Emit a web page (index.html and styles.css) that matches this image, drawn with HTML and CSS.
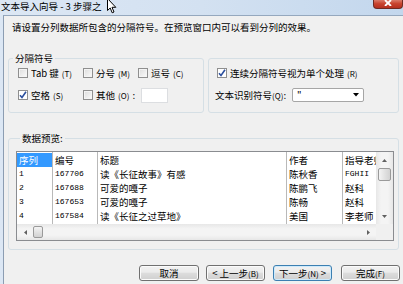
FILE: index.html
```html
<!DOCTYPE html>
<html lang="zh-CN">
<head>
<meta charset="utf-8">
<title>文本导入向导</title>
<link rel="stylesheet" href="styles.css">
</head>
<body>
<div class="window">
  <div class="titlebar">
    <span class="title">文本导入向导 - 3 步骤之</span>
    <svg class="cursor" width="10" height="14" viewBox="0 0 10 14"><path d="M0.5 -1.5 L0.5 10.5 L3.2 8 L5.2 12.8 L7 12 L5 7.3 L8.8 7.3 Z" fill="#fff" stroke="#000" stroke-width="1"/></svg>
    <div class="close"><svg width="8" height="6" viewBox="0 0 8 6"><path d="M1 0 L7 6 M7 0 L1 6" stroke="#fff" stroke-width="1.8"/></svg></div>
  </div>
  <div class="client">
    <p class="intro">请设置分列数据所包含的分隔符号。在预览窗口内可以看到分列的效果。</p>
    <div class="delims">
      <fieldset class="group g-left">
        <legend>分隔符号</legend>
        <div class="opts">
          <label class="cb"><span class="box"></span>Tab 键<span class="acc">(T)</span></label>
          <label class="cb"><span class="box"></span>分号<span class="acc">(M)</span></label>
          <label class="cb"><span class="box"></span>逗号<span class="acc">(C)</span></label>
          <label class="cb"><span class="box checked"><svg width="8" height="8" viewBox="0 0 8 8"><path d="M1 4.2 L3 6.5 L7 0.8" fill="none" stroke="#2b4f9e" stroke-width="1.6"/></svg></span>空格<span class="acc">(S)</span></label>
          <label class="cb span2"><span class="box"></span>其他<span class="acc">(O)</span>:<span class="other"></span></label>
        </div>
      </fieldset>
      <fieldset class="group g-right">
        <div class="ropts">
          <label class="cb"><span class="box checked"><svg width="8" height="8" viewBox="0 0 8 8"><path d="M1 4.2 L3 6.5 L7 0.8" fill="none" stroke="#2b4f9e" stroke-width="1.6"/></svg></span>连续分隔符号视为单个处理<span class="acc">(R)</span></label>
          <div class="qrow">
            <span>文本识别符号<span class="acc">(Q)</span>:</span>
            <div class="select"><span>"</span><svg width="6" height="4" viewBox="0 0 6 4"><path d="M0 0 H6 L3 3.5 Z" fill="#000"/></svg></div>
          </div>
        </div>
      </fieldset>
    </div>
    <fieldset class="group g-preview">
      <legend>数据预览:</legend>
      <div class="pbox">
        <div class="pdata">
          <div class="ptable">
            <div class="col c1"><div class="cell sel">序列</div><div class="cell mono">1</div><div class="cell mono">2</div><div class="cell mono">3</div><div class="cell mono">4</div></div>
            <div class="col c2"><div class="cell">编号</div><div class="cell mono">167706</div><div class="cell mono">167688</div><div class="cell mono">167653</div><div class="cell mono">167584</div></div>
            <div class="col c3"><div class="cell">标题</div><div class="cell">读《长征故事》有感</div><div class="cell">可爱的嘎子</div><div class="cell">可爱的嘎子</div><div class="cell">读《长征之过草地》</div></div>
            <div class="col c4"><div class="cell">作者</div><div class="cell">陈秋香</div><div class="cell">陈鹏飞</div><div class="cell">陈畅</div><div class="cell">美国</div></div>
            <div class="col c5"><div class="cell">指导老师</div><div class="cell mono">FGHII</div><div class="cell">赵科</div><div class="cell">赵科</div><div class="cell">李老师</div></div>
          </div>
          <div class="vscroll">
            <div class="sbtn"><svg width="5" height="3" viewBox="0 0 5 3"><path d="M0 3 L2.5 0 L5 3 Z" fill="#606060"/></svg></div>
            <div class="vthumb"></div>
            <div class="vtrack"></div>
            <div class="sbtn"><svg width="5" height="3" viewBox="0 0 5 3"><path d="M0 0 L2.5 3 L5 0 Z" fill="#606060"/></svg></div>
          </div>
        </div>
        <div class="pfoot">
          <div class="hscroll">
            <div class="hbtn"><svg width="3" height="5" viewBox="0 0 3 5"><path d="M3 0 L0 2.5 L3 5 Z" fill="#606060"/></svg></div>
            <div class="hthumb"></div>
            <div class="htrack"></div>
            <div class="hbtn"><svg width="3" height="5" viewBox="0 0 3 5"><path d="M0 0 L3 2.5 L0 5 Z" fill="#606060"/></svg></div>
          </div>
          <div class="corner"></div>
        </div>
      </div>
    </fieldset>
    <div class="buttons">
      <button class="btn b-cancel">取消</button>
      <button class="btn b-prev">&lt; 上一步<span class="acc">(B)</span></button>
      <button class="btn b-next default">下一步<span class="acc">(N)</span> &gt;</button>
      <button class="btn b-finish">完成<span class="acc">(F)</span></button>
    </div>
  </div>
</div>
</body>
</html>
```

FILE: styles.css
```css
* { box-sizing: border-box; }
html, body { margin: 0; padding: 0; }
body {
  width: 403px; height: 284px; overflow: hidden;
  font-family: "Noto Sans CJK SC", "Noto Sans", sans-serif;
  font-size: 9.5px; color: #000;
}
.window {
  width: 403px; height: 284px;
  display: flex; flex-direction: column;
  background: linear-gradient(90deg, #dce7f4 0%, #d3e1f1 50%, #c3d7ed 100%);
}
.titlebar {
  height: 15px; flex: none;
  display: flex; align-items: flex-start;
  position: relative;
}
.title { line-height: 11px; white-space: nowrap; color: #000; padding: 1px 0 0 1px; }
.cursor { position: absolute; left: 107px; top: 0; }
.close {
  margin-left: auto; width: 30px; height: 9px;
  background: linear-gradient(#d97a69, #c8442f 45%, #b5301f);
  border: 1px solid #6e2a22; border-top: none;
  border-radius: 0 0 4px 4px;
  display: flex; justify-content: center; align-items: flex-start;
}
.client {
  flex: 1; display: flex; flex-direction: column;
  margin-left: 3px;
  background: #f0f0f0;
  border-left: 1px solid #8c9db2; border-top: 1px solid #95a8be;
  padding: 0 4px 0 4px;
}
.intro { margin: 5px 0 0 4px; line-height: 12px; white-space: nowrap; }
.acc { font-size: 8px; }

.group {
  margin: 0; padding: 0; min-width: 0;
  border: 1px solid #d5dfe5; border-radius: 3px;
}
.group legend { padding: 0 2px; margin-left: 4px; line-height: 10px; }

.delims { display: flex; margin-top: 20px; }
.g-left { width: 196px; flex: none; }
.g-right { flex: 1; margin-left: 4px; margin-top: 5px; }
.opts {
  display: grid; grid-template-columns: 65px 55px auto;
  grid-template-rows: 14px 16px; row-gap: 7px;
  padding: 3px 0 9px 9px;
}
.cb { display: flex; align-items: center; gap: 3px; white-space: nowrap; }
.span2 { grid-column: span 2; }
.box {
  width: 10px; height: 10px; flex: none;
  border: 1px solid #8f8f8f;
  background: linear-gradient(135deg, #dcdcdc, #fbfbfb);
  box-shadow: inset 0 0 0 1px #f4f4f4;
  display: flex; align-items: center; justify-content: center;
}
.box.checked { background: #fff; box-shadow: none; }
.other {
  width: 27px; height: 15px; margin-left: 3px; flex: none;
  background: #fff; border: 1px solid #dcdee1;
}
.ropts {
  display: flex; flex-direction: column; gap: 7px;
  padding: 7px 0 9px 8px;
}
.ropts .cb { height: 14px; }
.qrow { display: flex; align-items: center; height: 16px; margin-left: -2px; gap: 6px; }
.select {
  width: 72px; height: 14px;
  background: #fff; border: 1px solid #a6a6a6; border-radius: 2px;
  display: flex; align-items: center; justify-content: space-between;
  padding: 0 4px; line-height: 10px;
}

.g-preview { margin-top: 20px; padding: 8px 4px 8px 7px; }
.g-preview legend { margin-left: 4px; }
.pbox { border: 1px solid #8a8c90; background: #fff; }
.pdata { display: flex; height: 72px; }
.ptable { display: flex; width: 359px; overflow: hidden; }
.col { flex: none; padding-top: 1px; border-right: 1px solid #b9b9b9; overflow: hidden; }
.c1 { width: 36px; }
.c2 { width: 45px; }
.c3 { width: 189px; }
.c4 { width: 56px; }
.c5 { width: 33px; border-right: none; }
.cell { height: 14px; line-height: 14px; padding-left: 2px; white-space: nowrap; }
.cell.sel { background: #3399ff; color: #fff; }
.mono { font-family: "Liberation Mono", monospace; font-size: 8px; }

.vscroll {
  width: 17px; display: flex; flex-direction: column;
  background: linear-gradient(90deg, #e7e7e7, #f4f4f4 30%, #f4f4f4 70%, #e7e7e7);
}
.sbtn { height: 16px; flex: none; display: flex; align-items: center; justify-content: center; }
.vthumb {
  height: 13px; flex: none; margin: 0 2px;
  border: 1px solid #9a9a9a; border-radius: 2px;
  background: linear-gradient(90deg, #f4f4f4, #e2e2e2 50%, #d2d2d2);
}
.vtrack { flex: 1; }
.pfoot { display: flex; height: 16px; }
.hscroll {
  width: 359px; display: flex;
  background: linear-gradient(#e7e7e7, #f4f4f4 30%, #f4f4f4 70%, #e7e7e7);
}
.hbtn { width: 16px; flex: none; display: flex; align-items: center; justify-content: center; }
.hthumb {
  width: 10px; flex: none; margin: 2px 0;
  border: 1px solid #9a9a9a; border-radius: 2px;
  background: linear-gradient(#f4f4f4, #e2e2e2 50%, #d2d2d2);
}
.htrack { flex: 1; }
.corner { flex: 1; background: #f0f0f0; }

.buttons { display: flex; justify-content: flex-end; gap: 8px; margin-top: 15px; margin-right: -1px; }
.btn {
  font-family: inherit; font-size: 9.5px; color: #000;
  width: 59px; height: 16px; padding: 0; line-height: 12px;
  border: 1px solid #707070; border-radius: 3px;
  background: linear-gradient(#f2f2f2, #ebebeb 45%, #dddddd 50%, #cfcfcf);
  box-shadow: inset 0 0 0 1px #fbfbfb;
  white-space: nowrap;
}
.b-cancel { width: 60px; margin-right: -1px; }
.b-next { margin-right: 1px; }
.btn.default { border-color: #3c7fb1; box-shadow: inset 0 0 0 1px #cdeafc; }
```
